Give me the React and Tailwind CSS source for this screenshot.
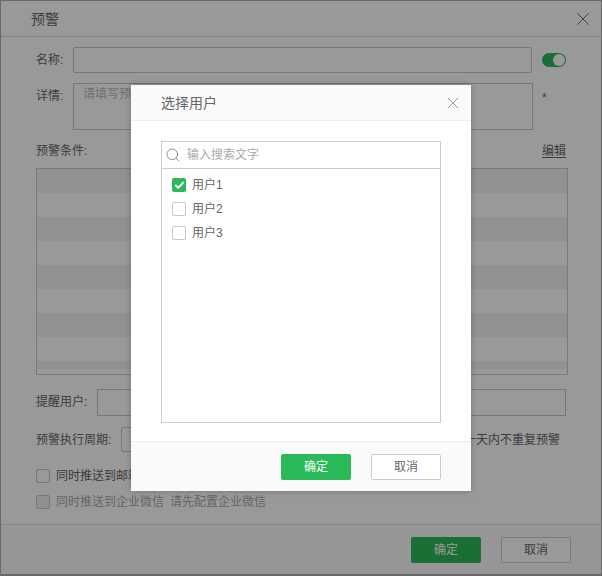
import React from "react";
import { Search, X, Check } from "lucide-react";

const fontCls = "font-['Liberation_Sans','Noto_Sans_CJK_SC',sans-serif]";

function Box({ checked, disabled }) {
  if (checked) {
    return (
      <span className="w-[14px] h-[14px] rounded-[2px] bg-[#2bba5a] flex items-center justify-center shrink-0">
        <Check size={11} strokeWidth={4} className="text-white" />
      </span>
    );
  }
  return (
    <span
      className={`w-[14px] h-[14px] rounded-[2px] border border-[#c8c8c8] shrink-0 ${
        disabled ? "bg-[#eeeeee]" : "bg-white"
      }`}
    />
  );
}

function UserRow({ name, checked }) {
  return (
    <div className="h-[24px] flex items-center gap-[6px] pl-[10px] text-xs text-[#666]">
      <Box checked={checked} />
      <span>{name}</span>
    </div>
  );
}

function AlertDialog() {
  return (
    <div className="h-[573px] ml-px mr-px mt-px bg-white flex flex-col text-xs text-[#666]">
      {/* header */}
      <div className="h-[36px] shrink-0 flex items-center justify-between pl-[30px] pr-[7px] border-b border-[#ddd] text-sm">
        <span>预警</span>
        <X size={22} strokeWidth={1} className="text-[#666]" />
      </div>

      <div className="flex-1 pl-[35px] pr-[35px]">
        <div className="mt-[10px] h-[26px] flex items-center">
          <span className="w-[37px]">名称:</span>
          <div className="w-[459px] h-[26px] border border-[#c8c8c8] rounded-[2px]" />
          <span className="ml-[10px] w-[24px] h-[14px] rounded-full bg-[#2bba5a] flex items-center justify-end pr-px">
            <span className="w-[12px] h-[12px] rounded-full bg-white" />
          </span>
        </div>

        <div className="mt-[10px] h-[47px] flex items-start">
          <span className="w-[37px] pt-[5px]">详情:</span>
          <div className="w-[460px] h-[47px] border border-[#c8c8c8] pl-[9px] pt-[2px] text-[#bbb]">
            请填写预警详情
          </div>
          <span className="ml-[9px] mt-[7px] text-[#e03030] text-xs">*</span>
        </div>

        <div className="mt-[12px] h-[18px] flex items-center justify-between">
          <span>预警条件:</span>
          <span className="underline underline-offset-2">编辑</span>
        </div>

        <div className="mt-[8px] mr-[-2px] h-[207px] border border-[#ccc] flex flex-col overflow-hidden">
          <div className="h-[24px] shrink-0 bg-[#f2f2f2]" />
          <div className="h-[24px] shrink-0" />
          <div className="h-[24px] shrink-0 bg-[#f2f2f2]" />
          <div className="h-[24px] shrink-0" />
          <div className="h-[24px] shrink-0 bg-[#f2f2f2]" />
          <div className="h-[24px] shrink-0" />
          <div className="h-[24px] shrink-0 bg-[#f2f2f2]" />
          <div className="h-[24px] shrink-0" />
          <div className="h-[8px] shrink-0 bg-[#f2f2f2]" />
        </div>

        <div className="mt-[14px] h-[27px] flex items-center">
          <span className="w-[61px] pb-[1px]">提醒用户:</span>
          <div className="flex-1 h-[27px] border border-[#c8c8c8]" />
        </div>

        <div className="mt-[11px] h-[25px] flex items-center">
          <span className="w-[85px]">预警执行周期:</span>
          <div className="w-[60px] h-[25px] border border-[#c8c8c8] rounded-[2px]" />
          <span className="ml-auto mr-[6px]">一天内不重复预警</span>
        </div>

        <div className="mt-[17px] h-[14px] flex items-center gap-[6px]">
          <Box />
          <span>同时推送到邮箱</span>
        </div>
        <div className="mt-[12px] h-[14px] flex items-center gap-[6px] text-[#aaa]">
          <Box disabled />
          <span>同时推送到企业微信</span>
          <span>请先配置企业微信</span>
        </div>
      </div>

      {/* footer */}
      <div className="h-[50px] shrink-0 border-t border-[#ddd] bg-[#fafafa] flex items-center justify-end gap-[20px] pr-[30px]">
        <button className="w-[70px] h-[26px] rounded-[2px] bg-[#2bba5a] text-white">确定</button>
        <button className="w-[70px] h-[26px] rounded-[2px] border border-[#ccc] bg-white text-[#666]">取消</button>
      </div>
    </div>
  );
}

function UserDialog() {
  return (
    <div className="absolute left-[131px] top-[85px] w-[340px] h-[406px] bg-white flex flex-col text-xs shadow-[0_0_6px_rgba(0,0,0,0.25)]">
      <div className="h-[36px] shrink-0 bg-[#fafafa] border-b border-[#eee] flex items-center justify-between pl-[30px] pr-[8px] text-sm text-[#666]">
        <span>选择用户</span>
        <X size={20} strokeWidth={1} className="text-[#888]" />
      </div>

      <div className="flex-1 px-[30px] pt-[20px]">
        <div className="h-[28px] border border-[#ccc] flex items-center pl-[3px] gap-[6px] text-[#aaa]">
          <Search size={16} strokeWidth={1.25} className="text-[#777]" />
          <span>输入搜索文字</span>
        </div>
        <div className="h-[254px] border border-t-0 border-[#ccc] pt-[4px]">
          <UserRow name="用户1" checked />
          <UserRow name="用户2" />
          <UserRow name="用户3" />
        </div>
      </div>

      <div className="h-[50px] shrink-0 bg-[#fafafa] border-t border-[#eee] flex items-center justify-end gap-[20px] pr-[30px]">
        <button className="w-[70px] h-[26px] rounded-[2px] bg-[#2bba5a] text-white">确定</button>
        <button className="w-[70px] h-[26px] rounded-[2px] border border-[#ccc] bg-white text-[#666]">取消</button>
      </div>
    </div>
  );
}

export default function App() {
  return (
    <div className={`relative w-[602px] h-[576px] overflow-hidden bg-[#b0b0b0] ${fontCls}`}>
      <AlertDialog />
      {/* mask over the first dialog */}
      <div className="absolute inset-0 bg-black/40" />
      <UserDialog />
    </div>
  );
}
